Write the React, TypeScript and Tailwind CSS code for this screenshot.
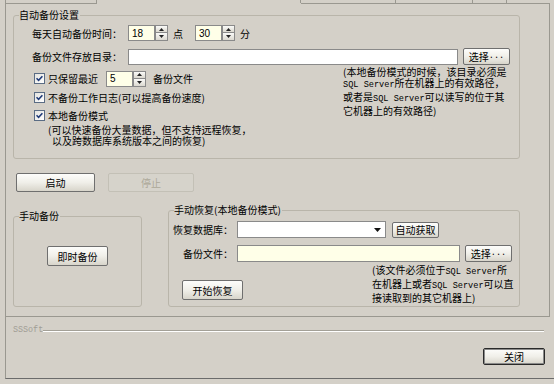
import React from "react";

const CJK = '"Noto Sans CJK SC", "Noto Sans", sans-serif';

function M({ children }: { children: React.ReactNode }) {
  return (
    <span className="text-[8.6px]" style={{ fontFamily: '"Liberation Mono", monospace' }}>
      {children}
    </span>
  );
}

function Btn({
  children,
  className = "",
  disabled = false,
  def = false,
}: {
  children: React.ReactNode;
  className?: string;
  disabled?: boolean;
  def?: boolean;
}) {
  if (disabled) {
    return (
      <div
        className={`flex items-center justify-center rounded-[2px] border border-[#c3c0b6] bg-[#d6d3cb] text-[#aca899] ${className}`}
      >
        {children}
      </div>
    );
  }
  return (
    <div
      className={`flex items-center justify-center rounded-[2px] border ${
        def ? "border-[#2a2a2a] shadow-[inset_0_0_0_1px_#8a8a8a]" : "border-[#6f6f6f]"
      } bg-gradient-to-b from-[#fdfdfb] via-[#f0efe9] to-[#d8d5cb] text-black ${className}`}
    >
      {children}
    </div>
  );
}

function Tri({ up }: { up?: boolean }) {
  return (
    <svg width="5" height="3" viewBox="0 0 5 3">
      <path d={up ? "M0 3 L5 3 L2.5 0 Z" : "M0 0 L5 0 L2.5 3 Z"} fill="#222" />
    </svg>
  );
}

function Spin({ value, w = 27 }: { value: string; w?: number }) {
  return (
    <div className="flex h-[16px]">
      <div
        className="flex h-full items-center border border-[#8a8a8a] bg-[#ffffe8] pl-[3px] text-[10px]"
        style={{ width: w, fontFamily: '"Liberation Sans", sans-serif' }}
      >
        {value}
      </div>
      <div className="flex h-full w-[13px] flex-col">
        <div className="flex h-[8px] items-center justify-center border border-[#8a8a8a] bg-gradient-to-b from-[#fafaf8] to-[#dcd9d0]">
          <Tri up />
        </div>
        <div className="flex h-[8px] items-center justify-center border border-t-0 border-[#8a8a8a] bg-gradient-to-b from-[#fafaf8] to-[#dcd9d0]">
          <Tri />
        </div>
      </div>
    </div>
  );
}

function Check() {
  return (
    <div className="flex h-[11px] w-[11px] items-center justify-center border border-[#5a6c84] bg-gradient-to-br from-[#e4e4e0] to-[#ffffff]">
      <svg width="7" height="7" viewBox="0 0 7 7">
        <path d="M0.5 3.2 L2.6 5.3 L6.4 1.3" stroke="#1f3a78" strokeWidth="1.6" fill="none" />
      </svg>
    </div>
  );
}

function Group({
  title,
  className = "",
  children,
}: {
  title: string;
  className?: string;
  children?: React.ReactNode;
}) {
  return (
    <div className={`relative rounded-[3px] border border-[#b9b5aa] ${className}`}>
      <span className="absolute left-[5px] top-[-8px] bg-[#d4d0c8] pr-[1px] leading-[14px]">{title}</span>
      {children}
    </div>
  );
}

export default function App() {
  return (
    <div
      className="h-[384px] w-[554px] overflow-hidden bg-[#d4d0c8] text-[10px] text-black"
      style={{ fontFamily: CJK }}
    >
      <div className="ml-[5px] flex h-[379px] w-[549px] flex-col border-b border-l border-b-[#6b6b6b] border-l-[#9a9890]">
        {/* tab strip remnants */}
        <div className="flex h-[3px] w-[544px]">
          <div className="h-full w-[91px] border-r border-[#9a9890]" />
          <div className="h-full w-[204px] border-r border-[#9a9890]" />
          <div className="h-full w-[95px] border-r border-[#9a9890]" />
          <div className="h-full w-[77px] border-r border-[#9a9890]" />
          <div className="h-full w-[34px] border-r border-[#9a9890]" />
        </div>
        <div className="flex h-[1px] w-[544px]">
          <div className="h-full w-[91px] bg-[#9a9890]" />
          <div className="h-full w-[204px]" />
          <div className="h-full flex-1 bg-[#9a9890]" />
        </div>
        {/* panel */}
        <div className="flex h-[313px] w-[544px] flex-col border-b border-r border-[#9a9890]">
          <Group title="自动备份设置" className="ml-[7px] mt-[11px] h-[144px] w-[507px]">
            <div className="flex flex-col pl-[18px] pt-[9px]">
              <div className="flex h-[16px] items-center">
                <div className="w-[96px]">每天自动备份时间：</div>
                <Spin value="18" />
                <div className="ml-[5px]">点</div>
                <div className="ml-[12px]">
                  <Spin value="30" />
                </div>
                <div className="ml-[5px]">分</div>
              </div>
              <div className="mt-[7px] flex h-[17px] items-center">
                <div className="w-[96px]">备份文件存放目录：</div>
                <div className="h-[16px] w-[330px] border border-[#8a8a8a] bg-white" />
                <Btn className="ml-[5px] h-[17px] w-[47px]">
                  选择<M>...</M>
                </Btn>
              </div>
              <div className="mt-[1px] flex">
                <div className="flex w-[311px] flex-col pt-[3px]">
                  <div className="flex h-[19px] items-center">
                    <div className="ml-[2px]">
                      <Check />
                    </div>
                    <div className="ml-[3px]">只保留最近</div>
                    <div className="ml-[8px]">
                      <Spin value="5" />
                    </div>
                    <div className="ml-[7px]">备份文件</div>
                  </div>
                  <div className="flex h-[19px] items-center">
                    <div className="ml-[2px]">
                      <Check />
                    </div>
                    <div className="ml-[3px]">不备份工作日志(可以提高备份速度)</div>
                  </div>
                  <div className="flex h-[17px] items-center">
                    <div className="ml-[2px]">
                      <Check />
                    </div>
                    <div className="ml-[3px]">本地备份模式</div>
                  </div>
                  <div className="pl-[16px] leading-[11px]">
                    <div>(可以快速备份大量数据，但不支持远程恢复，</div>
                    <div className="pl-[4px]">以及跨数据库系统版本之间的恢复)</div>
                  </div>
                </div>
                <div className="leading-[11px]">
                  <div>(本地备份模式的时候，该目录必须是</div>
                  <div>
                    <M>SQL Server</M>所在机器上的有效路径，
                  </div>
                  <div>
                    或者是<M>SQL Server</M>可以读写的位于其
                  </div>
                  <div>它机器上的有效路径)</div>
                </div>
              </div>
            </div>
          </Group>

          <div className="ml-[10px] mt-[14px] flex h-[19px]">
            <Btn className="h-[19px] w-[79px]">启动</Btn>
            <Btn disabled className="ml-[13px] h-[19px] w-[86px]">
              停止
            </Btn>
          </div>

          <div className="mt-[18px] flex items-start">
            <Group title="手动备份" className="ml-[7px] mt-[6px] flex h-[91px] w-[129px] justify-center">
              <Btn className="mt-[29px] h-[20px] w-[61px]">即时备份</Btn>
            </Group>
            <Group title="手动恢复(本地备份模式)" className="ml-[26px] h-[97px] w-[352px]">
              <div className="flex flex-col pt-[10px]">
                <div className="flex h-[17px] items-center">
                  <div className="w-[68px] pr-[4px] text-right">恢复数据库：</div>
                  <div className="flex h-[17px] w-[149px] items-center justify-end border border-[#8a8a8a] bg-white pr-[4px]">
                    <svg width="7" height="4" viewBox="0 0 7 4">
                      <path d="M0 0 L7 0 L3.5 4 Z" fill="#111" />
                    </svg>
                  </div>
                  <Btn className="ml-[6px] h-[16px] w-[47px]">自动获取</Btn>
                </div>
                <div className="mt-[7px] flex h-[17px] items-center">
                  <div className="w-[68px] pr-[4px] text-right">备份文件：</div>
                  <div className="h-[17px] w-[223px] border border-[#8a8a8a] bg-[#ffffe8]" />
                  <Btn className="ml-[5px] h-[17px] w-[47px]">
                    选择<M>...</M>
                  </Btn>
                </div>
                <div className="flex">
                  <Btn className="ml-[13px] mt-[18px] h-[20px] w-[61px]">开始恢复</Btn>
                  <div className="ml-[129px] mt-[2px] leading-[11px]">
                    <div>
                      (该文件必须位于<M>SQL Server</M>所
                    </div>
                    <div>
                      在机器上或者<M>SQL Server</M>可以直
                    </div>
                    <div>接读取到的其它机器上)</div>
                  </div>
                </div>
              </div>
            </Group>
          </div>
        </div>

        {/* footer */}
        <div className="mt-[8px] flex h-[11px] items-center">
          <span className="ml-[7px] text-[#a09d95]" style={{ fontFamily: '"Liberation Mono", monospace', fontSize: "8.4px" }}>
            SSSoft
          </span>
          <div className="mr-[10px] flex-1 border-b border-t border-b-white border-t-[#a3a097]" />
        </div>
        <div className="mt-[12px] flex justify-end">
          <Btn def className="mr-[9px] h-[17px] w-[62px]">
            关闭
          </Btn>
        </div>
      </div>
    </div>
  );
}
